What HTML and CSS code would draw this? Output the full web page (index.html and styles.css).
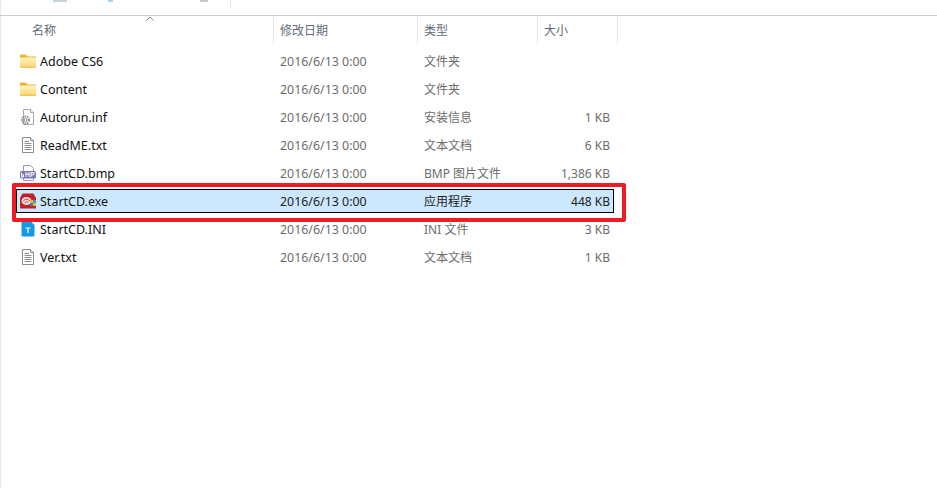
FILE: index.html
```html
<!doctype html>
<html lang="zh-CN">
<head>
  <meta charset="utf-8">
  <title>StartCD</title>
  <link rel="stylesheet" href="styles.css">
</head>
<body>

<svg class="defs" width="0" height="0">
  <defs>
    <linearGradient id="folderFill" x1="0" y1="0" x2="0" y2="1">
      <stop offset="0" stop-color="#fff3c4"/>
      <stop offset="1" stop-color="#fcd877"/>
    </linearGradient>
    <symbol id="folder" viewBox="0 0 16 16">
      <path d="M0 2.500C0 1.800.5 1.500 1 1.500H5.500L7.500 3.500H15.500C15.800 3.500 16 3.700 16 4V14C16 14.500 15.700 14.800 15.200 14.800H.8C.3 14.800 0 14.500 0 14Z" fill="#f0b429"/>
      <rect x="0" y="4.500" width="16" height="9.300" fill="url(#folderFill)"/>
    </symbol>
    <symbol id="doc" viewBox="0 0 16 16">
      <path d="M2.500.5H10.500L13.500 3.500V15.500H2.500Z" fill="#fff" stroke="#8d8d8d"/>
      <path d="M10.500.5V3.500H13.500" fill="#ececec" stroke="#8d8d8d"/>
      <path d="M4.500 4.500H9M4.500 6.500H11.500M4.500 8.500H11.500M4.500 10.500H11.500M4.500 12.500H11.500" stroke="#8d8d8d"/>
    </symbol>
  </defs>
</svg>

<div class="window">
  <div class="toolbar">
    <span class="crumb crumb-a"></span>
    <span class="crumb crumb-b"></span>
    <span class="crumb crumb-c"></span>
    <span class="toolbar-sep"></span>
  </div>

  <div class="head">
    <div class="th col-name">名称<span class="sort"><svg width="8" height="5" viewBox="0 0 8 5"><path d="M.5 4.500 4 1 7.500 4.500" fill="none" stroke="#8a8a8a"/></svg></span></div>
    <div class="th col-date">修改日期</div>
    <div class="th col-type">类型</div>
    <div class="th col-size">大小</div>
  </div>

  <div class="list">
    <div class="row">
      <div class="col-name"><svg class="icon"><use href="#folder"/></svg>Adobe CS6</div>
      <div class="col-date">2016/6/13 0:00</div>
      <div class="col-type">文件夹</div>
      <div class="col-size"></div>
    </div>
    <div class="row">
      <div class="col-name"><svg class="icon"><use href="#folder"/></svg>Content</div>
      <div class="col-date">2016/6/13 0:00</div>
      <div class="col-type">文件夹</div>
      <div class="col-size"></div>
    </div>
    <div class="row">
      <div class="col-name">
        <svg class="icon" viewBox="0 0 16 16">
          <path d="M3.500.5H10.500L13.500 3.500V15.500H3.500Z" fill="#fff" stroke="#a8a8a8"/>
          <path d="M10.500.5V3.500H13.500" fill="#eee" stroke="#a8a8a8"/>
          <circle cx="5.500" cy="11" r="3.500" fill="none" stroke="#8a8a8a" stroke-width="2" stroke-dasharray="1.500 1"/>
          <circle cx="5.500" cy="11" r="1.500" fill="#fff" stroke="#8a8a8a"/>
        </svg>Autorun.inf</div>
      <div class="col-date">2016/6/13 0:00</div>
      <div class="col-type">安装信息</div>
      <div class="col-size">1 KB</div>
    </div>
    <div class="row">
      <div class="col-name"><svg class="icon"><use href="#doc"/></svg>ReadME.txt</div>
      <div class="col-date">2016/6/13 0:00</div>
      <div class="col-type">文本文档</div>
      <div class="col-size">6 KB</div>
    </div>
    <div class="row">
      <div class="col-name">
        <svg class="icon" viewBox="0 0 16 16">
          <path d="M3.500.5H10.500L13.500 3.500V15.500H3.500Z" fill="#fff" stroke="#9a94c8"/>
          <rect x="0" y="6" width="16" height="7.500" rx="1.500" fill="#7d76b8"/>
          <path d="M1.500 7.500V12H3.500V9.800H1.500M6 12V7.500L7.500 10 9 7.500V12M11 12V7.500H14V9.800H11" fill="none" stroke="#fff"/>
        </svg>StartCD.bmp</div>
      <div class="col-date">2016/6/13 0:00</div>
      <div class="col-type">BMP 图片文件</div>
      <div class="col-size">1,386 KB</div>
    </div>
    <div class="row selected">
      <div class="col-name">
        <svg class="icon" viewBox="0 0 16 16">
          <path d="M0 5 2.500 .5H13.500L16 5V14.500C16 15.200 15.600 15.500 15 15.500H1C.4 15.500 0 15.200 0 14.500Z" fill="#c21f26"/>
          <ellipse cx="6.500" cy="8" rx="5" ry="4" fill="#f6e3e0"/>
          <path d="M3 8.500C5 5.500 8 5.500 9.500 8M5 10C6 8 7.500 8 8 10" fill="none" stroke="#c21f26"/>
          <rect x="10" y="7" width="3" height="3" fill="#f3b61f"/>
          <rect x="13" y="10" width="3" height="3" fill="#f3b61f"/>
          <rect x="10" y="10" width="3" height="3" fill="#2b7cd3"/>
          <rect x="13" y="7" width="3" height="3" fill="#3f9ae0"/>
        </svg>StartCD.exe</div>
      <div class="col-date">2016/6/13 0:00</div>
      <div class="col-type">应用程序</div>
      <div class="col-size">448 KB</div>
    </div>
    <div class="row">
      <div class="col-name">
        <svg class="icon" viewBox="0 0 16 16">
          <path d="M1.500 2C1.500 1 2 .5 3 .5H11L14.500 4V14C14.500 15 14 15.500 13 15.500H3C2 15.500 1.500 15 1.500 14Z" fill="#149ae3"/>
          <path d="M5.500 7H10.500M8 7V12" fill="none" stroke="#fff" stroke-width="1.200"/>
        </svg>StartCD.INI</div>
      <div class="col-date">2016/6/13 0:00</div>
      <div class="col-type">INI 文件</div>
      <div class="col-size">3 KB</div>
    </div>
    <div class="row">
      <div class="col-name"><svg class="icon"><use href="#doc"/></svg>Ver.txt</div>
      <div class="col-date">2016/6/13 0:00</div>
      <div class="col-type">文本文档</div>
      <div class="col-size">1 KB</div>
    </div>

    <div class="mark"></div>
  </div>
</div>

</body>
</html>
```

FILE: styles.css
```css
html, body {
  margin: 0;
  height: 100%;
  background: #fff;
}
body {
  font-family: "Noto Sans", "Noto Sans CJK SC", sans-serif;
  font-size: 12px;
  color: #6d6d6d;
  overflow: hidden;
}
.defs {
  position: absolute;
}
.window {
  height: 100%;
  border-left: 1px solid #e6e9ee;
  box-sizing: border-box;
}
.toolbar {
  height: 15px;
  display: flex;
  align-items: flex-start;
  border-bottom: 1px solid #c9ced8;
  margin-left: -1px;
}
.crumb {
  height: 2px;
}
.crumb-a {
  width: 14px;
  margin-left: 53px;
  background: #c6d3e2;
}
.crumb-b {
  width: 5px;
  margin-left: 41px;
  background: #a9d3f2;
}
.crumb-c {
  width: 8px;
  margin-left: 87px;
  background: #c9c9c9;
}
.toolbar-sep {
  width: 1px;
  height: 8px;
  margin-left: 22px;
  background: #e4e6ea;
}
.head {
  display: grid;
  grid-template-columns: 259px 144px 120px 80px;
  margin-left: 14px;
  height: 27px;
}
.th {
  position: relative;
  display: flex;
  align-items: center;
  padding-left: 6px;
  border-right: 1px solid #e5e5e5;
  color: #5f6b7a;
  height: 27px;
}
.th.col-name {
  padding-left: 17px;
}
.sort {
  position: absolute;
  left: 131px;
  top: 0;
  line-height: 0;
}
.list {
  position: relative;
  padding-top: 6px;
}
.row {
  display: grid;
  grid-template-columns: 258px 144px 120px 74px;
  height: 24px;
  width: 598px;
  margin: 0 0 4px 15px;
  align-items: center;
  box-sizing: border-box;
  border: 1px solid transparent;
}
.row .col-name {
  display: flex;
  align-items: center;
  gap: 4px;
  padding-left: 3px;
  color: #111;
  font-size: 12.500px;
}
.row .col-date {
  padding-left: 5px;
  font-size: 12.400px;
}
.row .col-type {
  padding-left: 5px;
}
.row .col-size {
  text-align: right;
  padding-right: 3px;
}
.icon {
  width: 16px;
  height: 16px;
  flex: none;
}
.selected {
  background: #cce8ff;
  border-color: #000;
  color: #222;
}
.mark {
  position: absolute;
  left: 11px;
  top: 140px;
  width: 614px;
  height: 39px;
  box-sizing: border-box;
  border: 4px solid #ee1c25;
  border-radius: 2px;
}
```
